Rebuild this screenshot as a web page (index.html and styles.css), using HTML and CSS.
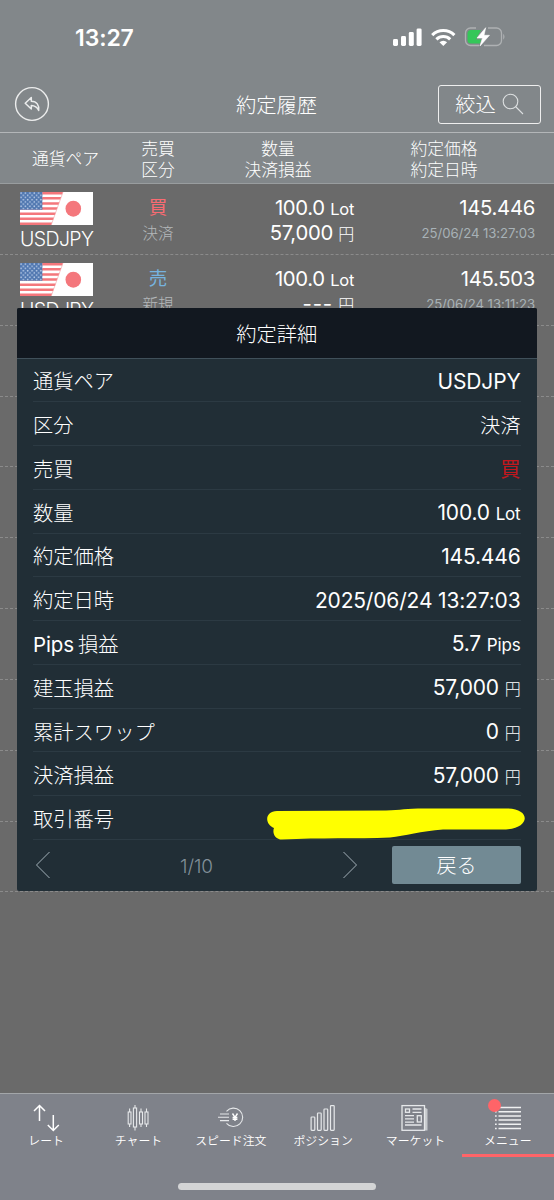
FILE: index.html
```html
<!DOCTYPE html>
<html lang="ja">
<head>
<meta charset="utf-8">
<title>約定履歴</title>
<link rel="stylesheet" href="styles.css">
</head>
<body>
<svg width="0" height="0" class="defs">
  <defs>
    <pattern id="stars" width="4.4" height="4.4" patternUnits="userSpaceOnUse">
      <rect width="4.4" height="4.4" fill="#5077b0"/>
      <circle cx="1.1" cy="1.1" r=".85" fill="#b5c9e6"/>
      <circle cx="3.3" cy="3.3" r=".85" fill="#b5c9e6"/>
    </pattern>
    <symbol id="flags" viewBox="0 0 73 33">
      <rect width="73" height="33" fill="#fff"/>
      <g fill="#f4777c">
        <path d="M0 0H43L42.1 2.5H0zM0 5.1H41.2L40.3 7.6H0zM0 10.2H39.4L38.5 12.7H0zM0 15.3H37.6L36.7 17.8H0zM0 20.4H35.8L34.9 22.9H0zM0 25.5H34L33.1 28H0zM0 30.5H32.2L31.2 33H0z"/>
        <ellipse cx="53.3" cy="16.7" rx="7.8" ry="8"/>
      </g>
      <path d="M43 0L31.2 33" stroke="#f4a1a4" stroke-width=".6"/>
      <rect width="22.4" height="17.8" fill="url(#stars)"/>
    </symbol>
  </defs>
</svg>
<div class="screen">
  <header class="top">
    <div class="status">
      <span class="clock">13:27</span>
      <svg class="status-icons" width="114" height="22" viewBox="0 0 114 22">
        <g fill="#fff">
          <rect x="0" y="13" width="5" height="7" rx="1.4"/>
          <rect x="8" y="10" width="5" height="10" rx="1.4"/>
          <rect x="15.8" y="6" width="5" height="14" rx="1.4"/>
          <rect x="23.6" y="2.4" width="5" height="17.6" rx="1.4"/>
        </g>
        <g fill="none" stroke="#fff" stroke-width="3.1">
          <path d="M39.2 9.1a15.8 15.8 0 0 1 22.2 0"/>
          <path d="M43.4 13.4a9.8 9.8 0 0 1 13.8 0"/>
        </g>
        <path d="M46.5 16.2a5.4 5.4 0 0 1 7.6 0L50.3 20z" fill="#fff"/>
        <path d="M83 2H77.500a5 5 0 0 0-5 5v7.500a5 5 0 0 0 5 5H86M95 2h8.500a5 5 0 0 1 5 5v7.500a5 5 0 0 1-5 5H91" fill="none" stroke="#aeb1b3" stroke-width="1.3"/>
        <path d="M88 4H78a3.500 3.500 0 0 0-3.500 3.500v6.500a3.500 3.500 0 0 0 3.500 3.500h9l1-4h-5z" fill="#34c759"/>
        <path d="M110.200 7.800q2.600 3 0 6z" fill="#aeb1b3"/>
        <path d="M92.700 1.700L84 12h5.500L87 20 96.500 9.300H91z" fill="#fff" stroke="#fff" stroke-width=".6" stroke-linejoin="round"/>
      </svg>
    </div>
    <div class="titlebar">
      <svg class="back" width="36" height="36" viewBox="0 0 36 36" fill="none" stroke="#eceded">
        <circle cx="18" cy="18" r="16.400" stroke-width="1.400"/>
        <path d="M17.300 11.500V15.300C22.800 15.400 25.300 19 24.700 24.500C23.200 21.100 21.500 19.600 17.300 19.500V23L11.200 17.300z" stroke-width="1.500" stroke-linejoin="round"/>
      </svg>
      <h1 class="title">約定履歴</h1>
      <button class="filter"><span>絞込</span>
        <svg width="22" height="22" viewBox="0 0 22 22" fill="none" stroke="#dcdfe0" stroke-width="1.100"><circle cx="8.500" cy="8.500" r="7.300"/><path d="M13.500 13.500L21 21"/></svg>
      </button>
    </div>
    <div class="columns">
      <span class="c-pair">通貨ペア</span>
      <span class="c-side">売買<br>区分</span>
      <span class="c-qty">数量<br>決済損益</span>
      <span class="c-price">約定価格<br>約定日時</span>
    </div>
  </header>
  <main class="list">
    <div class="row">
      <div class="pair"><svg width="73" height="33"><use href="#flags"/></svg><span>USDJPY</span></div>
      <div class="side"><b class="buy">買</b><small>決済</small></div>
      <div class="qty"><p>100.0 <i>Lot</i></p><p>57,000 <i class="yen">円</i></p></div>
      <div class="price"><p>145.446</p><small>25/06/24 13:27:03</small></div>
    </div>
    <div class="row">
      <div class="pair"><svg width="73" height="33"><use href="#flags"/></svg><span>USDJPY</span></div>
      <div class="side"><b class="sell">売</b><small>新規</small></div>
      <div class="qty"><p>100.0 <i>Lot</i></p><p><span class="none">---</span> <i class="yen">円</i></p></div>
      <div class="price"><p>145.503</p><small>25/06/24 13:11:23</small></div>
    </div>
    <div class="row"></div><div class="row"></div><div class="row"></div><div class="row"></div>
    <div class="row"></div><div class="row"></div><div class="row"></div><div class="row"></div>
  </main>
  <nav class="tabs">
    <div class="tab">
      <svg width="32" height="30" viewBox="0 0 32 30" fill="none" stroke="#fff" stroke-width="1.500"><path d="M9.500 18V3M4 8L9.500 2.500 15 8M23.300 12V27M17.800 22L23.300 27.500 28.800 22"/></svg>
      <span>レート</span>
    </div>
    <div class="tab">
      <svg width="32" height="30" viewBox="0 0 32 30" fill="none" stroke="#e6e8ea" stroke-width="1.100"><path d="M7.600 5.500V9M7.600 21V24M13 2V5M13 24V27.500M19 5.500V9M19 21V24M24.500 5.500V9M24.500 21V24"/><rect x="6.200" y="9" width="2.800" height="12"/><rect x="11.400" y="5" width="3.200" height="19"/><rect x="17.500" y="9" width="3" height="12"/><rect x="23" y="9" width="3" height="12"/></svg>
      <span>チャート</span>
    </div>
    <div class="tab">
      <svg width="32" height="30" viewBox="0 0 32 30" fill="none" stroke="#e6e8ea" stroke-width="1.100"><path d="M11.500 8.300A9.200 9.200 0 1 1 11.500 20.300M5 11h9M3 14.300h11M5 17.600h9"/><path d="M17.500 10.500L20 14.300 22.500 10.500M20 14.300V18M17.600 14.500h4.800M17.600 16.300h4.800" stroke="#fff" stroke-width="1.400"/></svg>
      <span class="wide">スピード注文</span>
    </div>
    <div class="tab">
      <svg width="32" height="30" viewBox="0 0 32 30" fill="none" stroke="#e6e8ea" stroke-width="1.200"><rect x="4.100" y="14" width="3.700" height="13.300" rx=".7"/><rect x="10.500" y="10" width="3.700" height="17.300" rx=".7"/><rect x="17" y="6" width="3.700" height="21.300" rx=".7"/><rect x="23.500" y="2.600" width="3.700" height="24.700" rx=".7"/></svg>
      <span>ポジション</span>
    </div>
    <div class="tab">
      <svg width="32" height="30" viewBox="0 0 32 30" fill="none" stroke="#e6e8ea" stroke-width="1.300"><path d="M25.500 4.500L28.500 6V27.500H25.500z" fill="#c7cacd" stroke="none"/><rect x="3" y="2.600" width="22.500" height="24.700"/><rect x="6.500" y="6" width="4" height="3.300"/><path d="M13.500 6h9M13.500 9.300h9M6 12.600h9M6 15.900h9M6 19.200h9M6 22h16.500"/><rect x="18.300" y="12.700" width="4" height="6.300"/></svg>
      <span>マーケット</span>
    </div>
    <div class="tab active">
      <svg width="32" height="30" viewBox="0 0 32 30" fill="none" stroke="#eff0f1" stroke-width="1.500"><path d="M6.500 4.500H29M6.500 8.700H29M6.500 12.900H29M6.500 17.100H29M6.500 21.300H29M6.500 25.500H29"/><path d="M3 4.500H4.700M3 8.700H4.700M3 12.900H4.700M3 17.100H4.700M3 21.300H4.700M3 25.500H4.700"/></svg>
      <span>メニュー</span>
      <em class="badge"></em>
    </div>
  </nav>
  <div class="home"></div>

  <section class="modal">
    <h2>約定詳細</h2>
    <dl>
      <div><dt>通貨ペア</dt><dd>USDJPY</dd></div>
      <div><dt>区分</dt><dd class="jp">決済</dd></div>
      <div><dt>売買</dt><dd class="jp red">買</dd></div>
      <div><dt>数量</dt><dd>100.0 <i>Lot</i></dd></div>
      <div><dt>約定価格</dt><dd>145.446</dd></div>
      <div><dt>約定日時</dt><dd class="date">2025/06/24 13:27:03</dd></div>
      <div><dt><span class="latin">Pips</span>損益</dt><dd>5.7 <i>Pips</i></dd></div>
      <div><dt>建玉損益</dt><dd>57,000 <i class="yen">円</i></dd></div>
      <div><dt>累計スワップ</dt><dd>0 <i class="yen">円</i></dd></div>
      <div><dt>決済損益</dt><dd>57,000 <i class="yen">円</i></dd></div>
      <div><dt>取引番号</dt><dd></dd></div>
    </dl>
    <footer>
      <svg width="16" height="28" viewBox="0 0 16 28" fill="none" stroke="#a3b0b8" stroke-width="1"><path d="M14.500 1L1.500 14 14.500 27"/></svg>
      <span class="page">1/10</span>
      <svg width="16" height="28" viewBox="0 0 16 28" fill="none" stroke="#a3b0b8" stroke-width="1"><path d="M1.500 1L14.500 14 1.500 27"/></svg>
      <button class="return">戻る</button>
    </footer>
    <svg class="marker" width="262" height="36" viewBox="0 0 262 36"><path d="M11 5L120 4.500C135 4 140 2.500 158 2.500H240C265 2 265 22 240 23.500H177C155 25 139 30 124 31.500C90 33 55 31.500 16 33.500C9 33.500 6 27 8 22C-2 18 -1 5 11 5z" fill="#ff0"/></svg>
  </section>
</div>
</body>
</html>
```
FILE: styles.css
```css
* { box-sizing: border-box; margin: 0; padding: 0; }
body {
  width: 554px; height: 1200px; overflow: hidden;
  font-family: Inter, "Noto Sans CJK JP", sans-serif;
  font-weight: 300; color: #fff; background: #6a6a6a;
}
button { font: inherit; color: inherit; }
i { font-style: normal; }
.defs { position: absolute; }
.screen { position: relative; display: flex; flex-direction: column; width: 554px; height: 1200px; overflow: hidden; }

.top { flex: none; height: 184px; background: #82878a; border-bottom: 1px solid #999d9f; }
.status { height: 76px; padding: 25px 47px 0 75px; display: flex; justify-content: space-between; align-items: flex-start; }
.clock { font-size: 23px; font-weight: 600; line-height: 26px; letter-spacing: -.1px; }
.status-icons { margin-top: 1px; }
.titlebar { height: 57px; display: grid; grid-template-columns: 120px 1fr 120px; align-items: center; padding: 0 13px 0 14px; border-bottom: 1px solid #b3b6b8; }
.title { font-size: 20.300px; font-weight: 300; text-align: center; line-height: 26px; padding: 3px 2px 0 0; }
.filter { width: 103px; height: 39px; justify-self: end; display: flex; align-items: center; justify-content: center; gap: 6px; padding: 0; font-size: 20.300px; line-height: 26px; background: none; border: 1.500px solid #eee; border-radius: 3px; }
.filter span { padding-top: 2px; }
.columns { height: 51px; padding-top: 3px; display: grid; grid-template-columns: 131px 54px 186px 146px; align-items: center; text-align: center; font-size: 16.800px; line-height: 21.500px; color: #fff; }

.list { flex: none; height: 909px; }
.row { height: 70.850px; display: grid; grid-template-columns: 93px 38px 54px 169px 181px; border-bottom: 1px dashed #8b8b8b; }
.pair { padding: 8px 0 0 20px; }
.pair svg { display: block; }
.pair span { display: block; font-size: 19.500px; line-height: 28px; letter-spacing: -.6px; font-weight: 350; }
.side { grid-column: 3; text-align: center; padding-top: 10px; }
.side b { display: block; font-size: 18.500px; font-weight: 400; line-height: 27px; }
.side small { display: block; font-size: 15.500px; line-height: 26px; color: #b4b8ba; }
.buy { color: #fa6b72; }
.sell { color: #76b3df; }
.qty, .price { text-align: right; padding-top: 11px; font-size: 20.300px; line-height: 25px; font-weight: 400; letter-spacing: -.3px; }
.qty p, .price p { height: 25px; }
.qty i { font-size: 16.500px; }
.qty .yen, .modal .yen { font-size: 16px; font-weight: 300; line-height: 16px; }
.none { letter-spacing: .8px; }
.price small { display: block; font-size: 13.200px; line-height: 26px; color: #a8b2b7; letter-spacing: -.08px; }

.tabs { flex: none; height: 107px; display: grid; grid-template-columns: repeat(6, 1fr); background: #7f828a; border-top: 1px solid #a3a6a9; }
.tab { position: relative; display: flex; flex-direction: column; align-items: center; height: 62px; padding-top: 9px; font-size: 11.900px; font-weight: 350; }
.tab span { line-height: 16px; white-space: nowrap; }
.active { border-bottom: 3px solid #ff6468; height: 63px; }
.badge { position: absolute; left: 26px; top: 5px; width: 13px; height: 13px; border-radius: 50%; background: #ff6468; }
.home { position: absolute; left: 178px; bottom: 10px; width: 198px; height: 7px; border-radius: 4px; background: #d3d4d5; }

.modal { position: absolute; left: 17px; top: 308px; width: 519.500px; height: 583px; background: #212e36; border-radius: 2px; overflow: hidden; }
.modal h2 { height: 50.500px; background: #121820; border-bottom: 1px solid #40505a; text-align: center; font-size: 20.300px; line-height: 53px; font-weight: 300; }
.modal dl { padding: 0 16px; }
.modal dl div { height: 43.780px; display: flex; justify-content: space-between; align-items: center; border-bottom: 1px solid #2c3a43; padding-top: 5px; }
.modal dt { font-size: 20.300px; line-height: 30px; height: 30px; }
.latin { font-size: 20.500px; font-weight: 400; letter-spacing: -.1px; margin-right: 4px; }
.modal dd { font-size: 21px; line-height: 30px; height: 30px; font-weight: 400; letter-spacing: -.17px; }
.modal dd:not(.jp) { margin-top: -1px; }
.modal dd.jp { font-size: 20.300px; font-weight: 300; letter-spacing: 0; }
.modal dd.red { color: #c2181e; font-weight: 400; }
.modal dd i { font-size: 17px; }
.modal footer { display: flex; align-items: center; height: 50px; padding: 1px 15.500px 0 18px; }
.page { width: 291px; padding-top: 2px; text-align: center; font-size: 19px; letter-spacing: -.1px; color: #82909a; }
.return { margin-left: auto; width: 129px; height: 38px; border: 0; border-radius: 2px; background: #728a94; font-size: 20px; line-height: 41px; }
.marker { position: absolute; left: 249px; top: 498px; }
```
